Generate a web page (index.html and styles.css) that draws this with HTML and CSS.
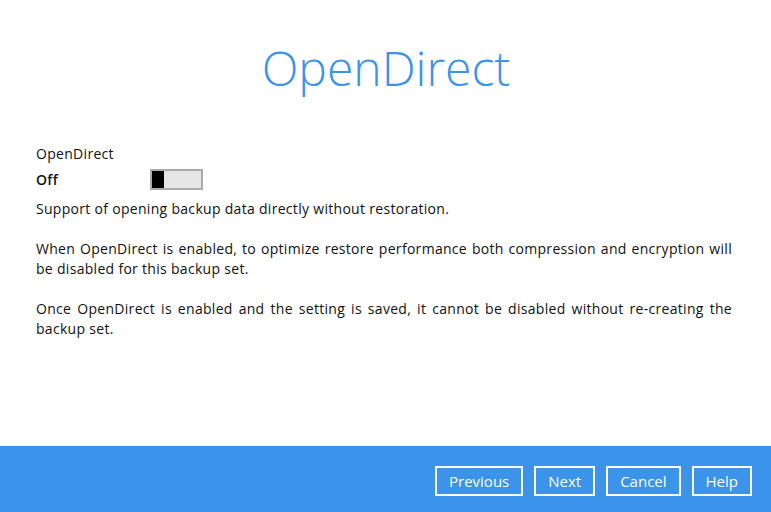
FILE: index.html
```html
<!DOCTYPE html>
<html lang="en">
<head>
    <meta charset="UTF-8">
    <meta name="viewport" content="width=device-width, initial-scale=1.0">
    <title>OpenDirect</title>
    <link rel="stylesheet" href="styles.css">
</head>
<body>
    <div class="page">
        <div class="content">
            <h1 class="title">OpenDirect</h1>

            <!-- OpenDirect setting -->
            <div class="setting">
                <div class="setting-label">OpenDirect</div>
                <div class="setting-row">
                    <span class="setting-state">Off</span>
                    <span class="toggle"><span class="toggle-knob"></span></span>
                </div>
            </div>

            <p class="note first">Support of opening backup data directly without restoration.</p>
            <p class="note">When OpenDirect is enabled, to optimize restore performance both compression and encryption will be disabled for this backup set.</p>
            <p class="note">Once OpenDirect is enabled and the setting is saved, it cannot be disabled without re-creating the backup set.</p>
        </div>

        <div class="footer">
            <button class="btn">Previous</button>
            <button class="btn">Next</button>
            <button class="btn">Cancel</button>
            <button class="btn">Help</button>
        </div>
    </div>
</body>
</html>
```

FILE: styles.css
```css
body {
    margin: 0;
    padding: 0;
    background-color: #fff;
    font-family: "Open Sans", "Noto Sans", sans-serif;
    color: #111;
}
.page {
    width: 771px;
    height: 512px;
    display: flex;
    flex-direction: column;
}
.content {
    flex: 1;
    padding: 0 39px 0 36px;
    letter-spacing: 0.3px;
}
.title {
    margin: 38px 0 0;
    padding-left: 4px;
    text-align: center;
    font-size: 48px;
    font-weight: 300;
    line-height: 60px;
    letter-spacing: 0;
    color: #3d93ea;
}
.setting {
    margin-top: 46px;
    font-size: 14px;
}
.setting-label {
    line-height: 20px;
}
.setting-row {
    display: flex;
    align-items: center;
    margin-top: 3px;
    height: 24px;
}
.setting-state {
    width: 114px;
    font-weight: 600;
}
.toggle {
    display: flex;
    width: 49px;
    height: 17px;
    border: 2px solid #ababab;
    background-color: #e6e6e6;
    box-sizing: content-box;
}
.toggle-knob {
    width: 12px;
    background-color: #000;
}
.note {
    margin: 20px 0 0;
    font-size: 14px;
    line-height: 20px;
    text-align: justify;
}
.note.first {
    margin-top: 8px;
}
.footer {
    height: 66px;
    box-sizing: border-box;
    background-color: #3b94ea;
    display: flex;
    justify-content: flex-end;
    align-items: flex-start;
    gap: 11px;
    padding: 20px 19px 0 0;
}
.btn {
    height: 30px;
    padding: 0 12px;
    border: 2px solid #fff;
    background-color: transparent;
    color: #fff;
    font-family: "Open Sans", "Noto Sans", sans-serif;
    font-size: 15px;
    cursor: pointer;
}
```
